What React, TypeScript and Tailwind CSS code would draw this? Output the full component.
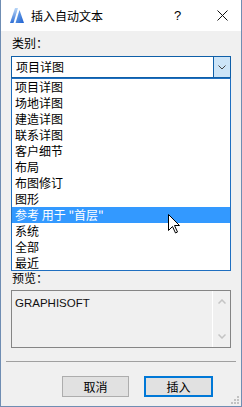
const items = [
  "项目详图",
  "场地详图",
  "建造详图",
  "联系详图",
  "客户细节",
  "布局",
  "布图修订",
  "图形",
  "参考 用于 \"首层\"",
  "系统",
  "全部",
  "最近",
];

const cjk = "font-['Microsoft_YaHei','Noto_Sans_CJK_SC',sans-serif]";

function AppIcon() {
  return (
    <svg width="15" height="15" viewBox="0 0 15 15">
      <defs>
        <linearGradient id="gl" x1="0" y1="1" x2="0" y2="0">
          <stop offset="0" stopColor="#2f6fd6" />
          <stop offset="1" stopColor="#b9d6f7" />
        </linearGradient>
        <linearGradient id="gr" x1="0" y1="0" x2="1" y2="1">
          <stop offset="0" stopColor="#7fb2ee" />
          <stop offset="1" stopColor="#1c5fcf" />
        </linearGradient>
      </defs>
      <polygon points="0,15 5,0 8,0 3.5,15" fill="url(#gl)" />
      <polygon points="5.5,15 9.5,2 14,15" fill="url(#gr)" />
    </svg>
  );
}

function Cursor() {
  return (
    <svg width="13" height="20" viewBox="0 0 13 20" className="absolute left-[167px] top-[214px] z-20">
      <path
        d="M0.5 0.5 L0.5 16.5 L4.5 12.5 L7.5 19 L9.5 18 L6.5 11.5 L11.5 11.5 Z"
        fill="#fff"
        stroke="#000"
        strokeWidth="1"
        strokeLinejoin="miter"
      />
    </svg>
  );
}

export default function App() {
  return (
    <div className={`relative w-[242px] h-[407px] bg-[#f0f0f0] border-x border-b border-[#6f8db3] text-black ${cjk} text-[12px] overflow-hidden`}>
      {/* title bar */}
      <div className="h-[31px] bg-white flex items-center">
        <div className="ml-[9px] mt-[-1px]">
          <AppIcon />
        </div>
        <span className="ml-[6px] leading-[16px] text-[12px]">插入自动文本</span>
        <span className="ml-[71px] font-['Liberation_Sans',sans-serif] text-[13px] leading-[16px]">?</span>
        <svg width="11" height="11" viewBox="0 0 11 11" className="ml-[36px]">
          <path d="M0.5 0.5 L10.5 10.5 M10.5 0.5 L0.5 10.5" stroke="#111" strokeWidth="1" />
        </svg>
      </div>

      <div className="px-[10px]">
        <div className="mt-[4px] pl-[1px] leading-[16px]">类别：</div>

        <div className="relative mt-[5px]">
          <div className="h-[22px] flex bg-white border border-[#0f5fa8]">
            <div className="flex-1 pl-[4px] flex items-center leading-[16px]">项目详图</div>
            <div className="w-[17px] bg-[#cce4f7] border-l border-[#0f5fa8] flex items-center justify-center">
              <svg width="8" height="5" viewBox="0 0 8 5">
                <path d="M0.5 0.5 L4 4 L7.5 0.5" fill="none" stroke="#444" strokeWidth="1" />
              </svg>
            </div>
          </div>

          <div className="absolute z-10 left-0 top-[22px] w-[220px] h-[193px] bg-white border border-[#1f6fc0]">
            {items.map((it, i) => (
              <div
                key={i}
                className={`h-[16px] pl-[3px] leading-[16px] whitespace-nowrap ${
                  i === 8 ? "bg-[#3399ff] text-white" : ""
                }`}
              >
                {it}
              </div>
            ))}
          </div>
        </div>

        <div className="mt-[194px] pl-[1px] leading-[12px]">预览：</div>

        <div className="mt-[6px] h-[58px] flex border border-[#858585]">
          <div className="flex-1 pl-[3px] pt-[5px] font-['Liberation_Sans',sans-serif] text-[11.5px] leading-[14px] text-[#111]">
            GRAPHISOFT
          </div>
          <div className="w-[18px] border-l border-white flex flex-col items-center justify-between py-[8px]">
            <svg width="8" height="5" viewBox="0 0 8 5">
              <path d="M0.5 4.5 L4 1 L7.5 4.5" fill="none" stroke="#c4c4c4" strokeWidth="1.5" />
            </svg>
            <svg width="8" height="5" viewBox="0 0 8 5">
              <path d="M0.5 0.5 L4 4 L7.5 0.5" fill="none" stroke="#c4c4c4" strokeWidth="1.5" />
            </svg>
          </div>
        </div>
      </div>

      <div className="mt-[13px] mx-[5px] h-px bg-[#a0a0a0]" />

      <div className="mt-[14px] flex pl-[61px] gap-[15px]">
        <button className="w-[67px] h-[21px] bg-[#e1e1e1] border border-[#adadad] leading-[16px] flex items-center justify-center">
          取消
        </button>
        <button className="w-[69px] h-[21px] bg-[#e1e1e1] border-2 border-[#0078d7] leading-[16px] flex items-center justify-center">
          插入
        </button>
      </div>

      <svg width="8" height="8" viewBox="0 0 8 8" className="absolute right-[2px] bottom-[2px]">
        <rect x="6" y="0" width="2" height="2" fill="#c2c2c2" />
        <rect x="3" y="3" width="2" height="2" fill="#c2c2c2" />
        <rect x="6" y="3" width="2" height="2" fill="#c2c2c2" />
        <rect x="0" y="6" width="2" height="2" fill="#c2c2c2" />
        <rect x="3" y="6" width="2" height="2" fill="#c2c2c2" />
        <rect x="6" y="6" width="2" height="2" fill="#c2c2c2" />
      </svg>

      <Cursor />
    </div>
  );
}
